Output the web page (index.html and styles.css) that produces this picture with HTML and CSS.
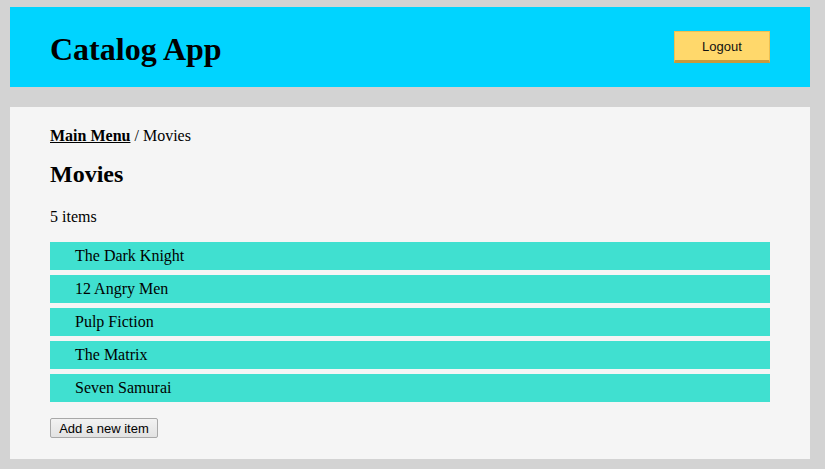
FILE: index.html
```html
<!DOCTYPE html>
<html>
<head>
<meta charset="utf-8">
<link rel="stylesheet" href="styles.css">
</head>
<body>
<div class="page">
  <header class="header">
    <h1 class="title">Catalog App</h1>
    <button class="logout">Logout</button>
  </header>
  <main class="content">
    <div class="crumbs"><a class="crumb-link" href="#">Main Menu</a> / Movies</div>
    <h2 class="heading">Movies</h2>
    <p class="count">5 items</p>
    <ul class="items">
      <li class="item">The Dark Knight</li>
      <li class="item">12 Angry Men</li>
      <li class="item">Pulp Fiction</li>
      <li class="item">The Matrix</li>
      <li class="item">Seven Samurai</li>
    </ul>
    <button class="add">Add a new item</button>
  </main>
</div>
</body>
</html>
```
FILE: styles.css
```css
html, body {
  margin: 0;
  padding: 0;
  background: #d3d3d3;
  font-family: "Liberation Serif", "Times New Roman", serif;
  color: #000;
}
.page {
  width: 800px;
  padding: 7px 0 10px 10px;
  display: flex;
  flex-direction: column;
  gap: 20px;
}
.header {
  height: 80px;
  background: #00d4ff;
  box-sizing: border-box;
  padding: 0 40px;
  display: flex;
  align-items: center;
  justify-content: space-between;
}
.title {
  margin: 0;
  padding-top: 5px;
  font-size: 32px;
  font-weight: bold;
  line-height: 37px;
}
.logout {
  width: 96px;
  height: 32px;
  box-sizing: border-box;
  background: #ffd86b;
  border: 1px solid #f0c050;
  border-bottom: 3px solid #c99a3c;
  font-family: "Liberation Sans", Arial, sans-serif;
  font-size: 13px;
  color: #111;
  padding: 1px 0 0;
  cursor: pointer;
}
.content {
  background: #f5f5f5;
  padding: 20px 40px 21px;
  display: flex;
  flex-direction: column;
  align-items: flex-start;
}
.crumbs {
  font-size: 16px;
  line-height: 18px;
}
.crumb-link {
  color: #000;
  font-weight: bold;
  text-decoration: underline;
}
.heading {
  margin: 15px 0 0;
  font-size: 24px;
  line-height: 28px;
  font-weight: bold;
}
.count {
  margin: 20px 0 0;
  font-size: 16px;
  line-height: 18px;
}
.items {
  list-style: none;
  margin: 16px 0 0;
  padding: 0;
  align-self: stretch;
  display: flex;
  flex-direction: column;
  gap: 5px;
}
.item {
  height: 28px;
  line-height: 28px;
  background: #40e0d0;
  padding-left: 25px;
  font-size: 16px;
}
.add {
  margin-top: 16px;
  width: 108px;
  height: 20px;
  box-sizing: border-box;
  padding: 0;
  background: linear-gradient(#f2f2f2, #e2e2e2);
  border: 1px solid #a8a8a8;
  border-radius: 2px;
  font-family: "Liberation Sans", Arial, sans-serif;
  font-size: 13px;
  color: #000;
}
```
